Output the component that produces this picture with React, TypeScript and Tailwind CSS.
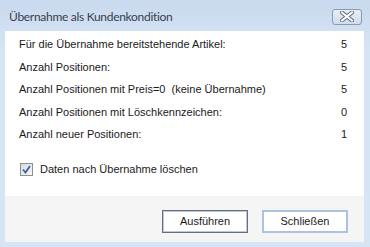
import React, { useState } from "react";

interface Row {
  label: string;
  value: number;
}

const rows: Row[] = [
  { label: "Für die Übernahme bereitstehende Artikel:", value: 5 },
  { label: "Anzahl Positionen:", value: 5 },
  { label: "Anzahl Positionen mit Preis=0  (keine Übernahme)", value: 5 },
  { label: "Anzahl Positionen mit Löschkennzeichen:", value: 0 },
  { label: "Anzahl neuer Positionen:", value: 1 },
];

const CloseGlyph = () => (
  <svg width="14" height="11" viewBox="0 0 14 11">
    {/* outlined white X like the classic caption button */}
    <path d="M2 1.5 L12 9.5 M12 1.5 L2 9.5" stroke="#5f6b7c" strokeWidth="4" strokeLinecap="square" />
    <path d="M2 1.5 L12 9.5 M12 1.5 L2 9.5" stroke="#ffffff" strokeWidth="2" strokeLinecap="square" />
  </svg>
);

export default function App() {
  const [checked, setChecked] = useState(true);

  return (
    <div
      className="w-[370px] h-[247px] flex flex-col bg-gradient-to-b from-[#c9d9ee] to-[#d6e5f5] to-[20%] pl-[5px] pr-[6px] pb-[5px]"
      style={{ fontFamily: '"Liberation Sans", Arial, sans-serif' }}
    >
      {/* title bar */}
      <div className="h-[31px] flex items-center justify-between">
        <span
          className="pl-[4px] pt-[2px] text-[12px] tracking-[-0.3px] text-[#37404d]"
          style={{ fontFamily: 'Lato, "Open Sans", sans-serif' }}
        >
          Übernahme als Kundenkondition
        </span>
        <button className="w-[30px] h-[16px] mb-[-2px] mr-[2px] flex items-center justify-center rounded-[3px] border border-[#8d9ab0] bg-gradient-to-b from-[#e8eef6] to-[#d0dcec]">
          <CloseGlyph />
        </button>
      </div>

      {/* client area */}
      <div className="flex-1 flex flex-col">
        <div className="flex-1 bg-white pl-[14px] pr-[17px] pt-[2px] text-[11px] text-[#1a1a1a]">
          {rows.map((r) => (
            <div key={r.label} className="h-[22.5px] flex items-center justify-between">
              <span className="whitespace-pre">{r.label}</span>
              <span>{r.value}</span>
            </div>
          ))}

          <label className="mt-[13px] h-[22px] flex items-center gap-[7px] pl-[1px] cursor-default">
            <span
              onClick={() => setChecked((c) => !c)}
              className="w-[13px] h-[13px] border border-[#8e8f8f] bg-gradient-to-br from-[#dcdcdc] to-[#f6f6f6] flex items-center justify-center"
            >
              {checked && (
                <svg width="9" height="9" viewBox="0 0 9 9">
                  <path d="M1 4.5 L3.5 7.5 L8 1" fill="none" stroke="#3c5fa8" strokeWidth="1.8" />
                </svg>
              )}
            </span>
            <span>Daten nach Übernahme löschen</span>
          </label>
        </div>

        {/* button strip */}
        <div className="h-[46px] bg-[#f5f5f5] flex justify-end items-start gap-[14px] pt-[14px] pr-[16px] text-[11px] text-[#1a1a1a]">
          <button className="w-[86px] h-[23px] border border-[#6e6e6e] bg-white flex items-center justify-center">
            <span className="w-full h-full border border-[#b5c8e5] flex items-center justify-center">Ausführen</span>
          </button>
          <button className="w-[86px] h-[23px] border-2 border-[#adc1e0] bg-white flex items-center justify-center">
            Schließen
          </button>
        </div>
      </div>
    </div>
  );
}
